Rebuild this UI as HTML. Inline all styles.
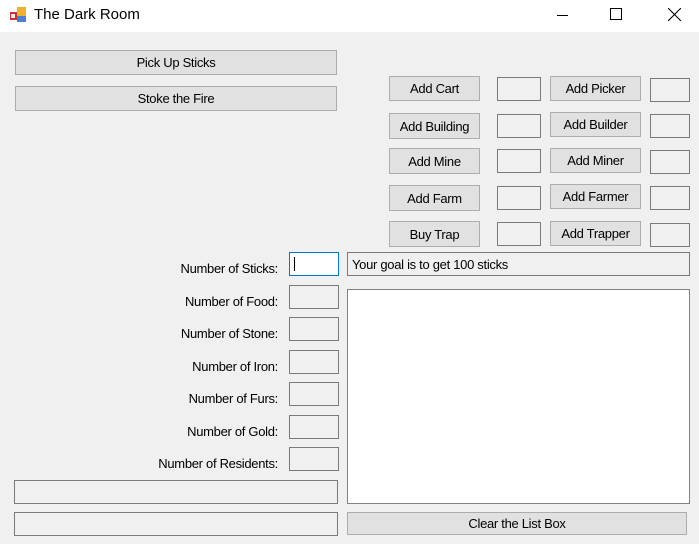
<!DOCTYPE html>
<html><head><style>
*{box-sizing:border-box;margin:0;padding:0}
body{width:699px;height:544px;background:#f0f0f0;font-family:"Liberation Sans",sans-serif;font-size:13px;color:#000;position:relative;overflow:hidden}
.t{position:absolute;left:0;top:0;width:699px;height:32px;background:#fff}
.a{position:absolute}
.b{position:absolute;background:#e1e1e1;border:1px solid #adadad;display:flex;align-items:center;justify-content:center;font-size:13px;letter-spacing:-0.3px}
.x{position:absolute;border:1px solid #7a7a7a;background:#f0f0f0}
.l{position:absolute;right:421px;font-size:13px;letter-spacing:-0.3px;white-space:nowrap}
</style></head><body>
<div class="t">
<svg class="a" style="left:10px;top:6px" width="18" height="18"><rect x="0" y="6" width="7" height="8" fill="#c33"/><rect x="1" y="8" width="4" height="4" fill="#eee"/><rect x="7" y="1" width="9" height="9" fill="#f0b030"/><rect x="7" y="10" width="9" height="6" fill="#4a7fd6"/></svg>
<div class="a" style="left:34px;top:6px;font-size:15px">The Dark Room</div>
<div class="a" style="left:557px;top:15px;width:11px;height:1px;background:#000"></div>
<div class="a" style="left:610px;top:8px;width:12px;height:12px;border:1px solid #000"></div>
<svg class="a" style="left:668px;top:8px" width="13" height="13"><path d="M0 0L13 13M13 0L0 13" stroke="#000" stroke-width="1.1"/></svg>
</div>
<div class="b" style="left:15px;top:50px;width:322px;height:25px">Pick Up Sticks</div>
<div class="b" style="left:15px;top:86px;width:322px;height:25px">Stoke the Fire</div>

<div class="b" style="left:389px;top:76px;width:91px;height:25px">Add Cart</div>
<div class="x" style="left:497px;top:77px;width:44px;height:24px"></div>
<div class="b" style="left:550px;top:76px;width:91px;height:25px">Add Picker</div>
<div class="x" style="left:650px;top:78px;width:40px;height:24px"></div>

<div class="b" style="left:389px;top:113px;width:91px;height:26px">Add Building</div>
<div class="x" style="left:497px;top:114px;width:44px;height:24px"></div>
<div class="b" style="left:550px;top:112px;width:91px;height:25px">Add Builder</div>
<div class="x" style="left:650px;top:114px;width:40px;height:24px"></div>

<div class="b" style="left:389px;top:148px;width:91px;height:26px">Add Mine</div>
<div class="x" style="left:497px;top:149px;width:44px;height:24px"></div>
<div class="b" style="left:550px;top:148px;width:91px;height:25px">Add Miner</div>
<div class="x" style="left:650px;top:150px;width:40px;height:24px"></div>

<div class="b" style="left:389px;top:185px;width:91px;height:26px">Add Farm</div>
<div class="x" style="left:497px;top:186px;width:44px;height:24px"></div>
<div class="b" style="left:550px;top:184px;width:91px;height:25px">Add Farmer</div>
<div class="x" style="left:650px;top:186px;width:40px;height:24px"></div>

<div class="b" style="left:389px;top:221px;width:91px;height:26px">Buy Trap</div>
<div class="x" style="left:497px;top:222px;width:44px;height:24px"></div>
<div class="b" style="left:550px;top:221px;width:91px;height:25px">Add Trapper</div>
<div class="x" style="left:650px;top:223px;width:40px;height:24px"></div>

<div class="x" style="left:289px;top:252px;width:50px;height:24px;border-color:#0078d7;background:#fff"><div class="a" style="left:4px;top:4px;width:1px;height:14px;background:#000"></div></div>
<div class="x" style="left:347px;top:252px;width:343px;height:24px;padding:4px 0 0 4px;letter-spacing:-0.3px">Your goal is to get 100 sticks</div>

<div class="l" style="top:261px">Number of Sticks:</div>
<div class="l" style="top:294px">Number of Food:</div>
<div class="x" style="left:289px;top:285px;width:50px;height:24px"></div>
<div class="l" style="top:326px">Number of Stone:</div>
<div class="x" style="left:289px;top:317px;width:50px;height:24px"></div>
<div class="l" style="top:359px">Number of Iron:</div>
<div class="x" style="left:289px;top:350px;width:50px;height:24px"></div>
<div class="l" style="top:391px">Number of Furs:</div>
<div class="x" style="left:289px;top:382px;width:50px;height:24px"></div>
<div class="l" style="top:424px">Number of Gold:</div>
<div class="x" style="left:289px;top:415px;width:50px;height:24px"></div>
<div class="l" style="top:456px">Number of Residents:</div>
<div class="x" style="left:289px;top:447px;width:50px;height:24px"></div>

<div class="x" style="left:347px;top:289px;width:343px;height:215px;background:#fff;border-color:#828282"></div>
<div class="x" style="left:14px;top:480px;width:324px;height:24px"></div>
<div class="x" style="left:14px;top:512px;width:324px;height:24px"></div>
<div class="b" style="left:347px;top:512px;width:340px;height:23px">Clear the List Box</div>
</body></html>
